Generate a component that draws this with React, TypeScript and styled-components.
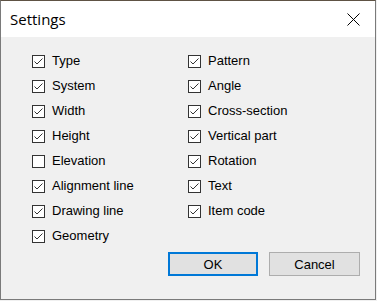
import React from "react";
import styled, { createGlobalStyle } from "styled-components";

const Global = createGlobalStyle`
  html, body { margin: 0; padding: 0; background: #f0f0f0; }
  #root { width: 377px; height: 301px; }
`;

const Window = styled.div`
  box-sizing: border-box;
  width: 376px;
  height: 300px;
  border: 1px solid #7a7a7a;
  border-top-color: #5e5244;
  background: #f0f0f0;
  display: flex;
  flex-direction: column;
  font-family: "Liberation Sans", Arial, sans-serif;
`;

const TitleBar = styled.div`
  height: 36px;
  background: #ffffff;
  display: flex;
  align-items: center;
  justify-content: space-between;
  padding: 0 0 0 9px;
`;

const Title = styled.div`
  font-family: "Open Sans", "Noto Sans", sans-serif;
  font-size: 15px;
  color: #000;
  padding-bottom: 1px;
`;

const CloseBtn = styled.div`
  width: 46px;
  height: 36px;
  display: flex;
  align-items: center;
  justify-content: center;
  margin-right: -1px;
`;

const Body = styled.div`
  flex: 1;
  display: flex;
  flex-direction: column;
  padding: 11px 15px 0 31px;
`;

const Grid = styled.div`
  display: grid;
  grid-template-columns: 156px 1fr;
  grid-auto-flow: column;
  grid-template-rows: repeat(8, 25px);
`;

const Row = styled.label`
  display: flex;
  align-items: center;
  gap: 7px;
  font-size: 13px;
  color: #000;
  height: 25px;
`;

const Box = styled.span`
  box-sizing: border-box;
  width: 13px;
  height: 13px;
  border: 1px solid #333333;
  background: #ffffff;
  display: inline-flex;
  align-items: center;
  justify-content: center;
  flex-shrink: 0;
  margin-top: 1px;
`;

const Footer = styled.div`
  display: flex;
  justify-content: flex-end;
  gap: 11px;
  margin-top: 4px;
`;

const Button = styled.button<{ $primary?: boolean }>`
  box-sizing: border-box;
  width: ${(p) => (p.$primary ? "90px" : "91px")};
  height: 24px;
  background: #e1e1e1;
  border: ${(p) => (p.$primary ? "2px solid #0078d7" : "1px solid #adadad")};
  font-family: "Liberation Sans", Arial, sans-serif;
  font-size: 13px;
  color: #000;
  padding: 0;
  margin: 0;
`;

const Check = ({ on }: { on: boolean }) => (
  <Box>
    {on && (
      <svg width="11" height="11" viewBox="0 0 11 11">
        <polyline points="1.5,5.5 4,8 9.5,2.5" fill="none" stroke="#333" strokeWidth="1" />
      </svg>
    )}
  </Box>
);

const items: [string, boolean][] = [
  ["Type", true],
  ["System", true],
  ["Width", true],
  ["Height", true],
  ["Elevation", false],
  ["Alignment line", true],
  ["Drawing line", true],
  ["Geometry", true],
  ["Pattern", true],
  ["Angle", true],
  ["Cross-section", true],
  ["Vertical part", true],
  ["Rotation", true],
  ["Text", true],
  ["Item code", true],
];

export default function App() {
  return (
    <>
      <Global />
      <Window>
        <TitleBar>
          <Title>Settings</Title>
          <CloseBtn>
            <svg width="13" height="13" viewBox="0 0 13 13">
              <path d="M0.5 0.5 L12.5 12.5 M12.5 0.5 L0.5 12.5" stroke="#000" strokeWidth="1" />
            </svg>
          </CloseBtn>
        </TitleBar>
        <Body>
          <Grid>
            {items.map(([label, on]) => (
              <Row key={label}>
                <Check on={on} />
                {label}
              </Row>
            ))}
          </Grid>
          <Footer>
            <Button $primary>OK</Button>
            <Button>Cancel</Button>
          </Footer>
        </Body>
      </Window>
    </>
  );
}
